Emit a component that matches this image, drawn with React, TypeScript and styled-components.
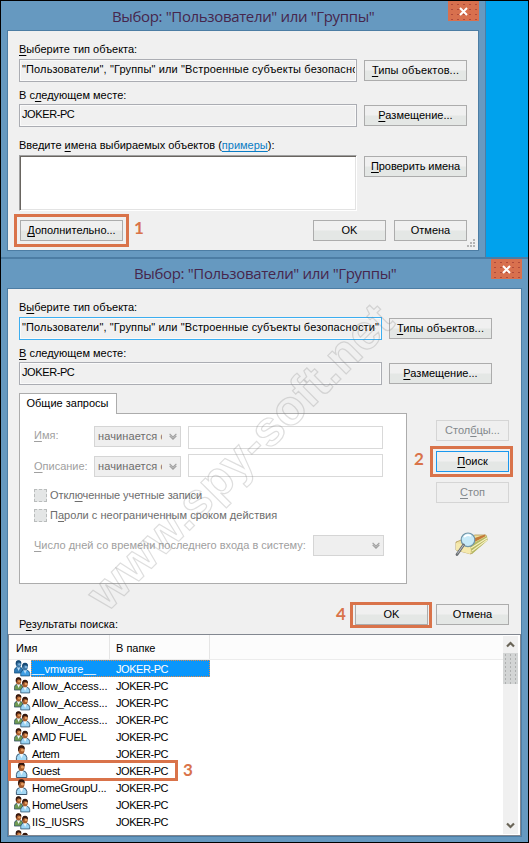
import React from "react";
import styled, { createGlobalStyle, css } from "styled-components";

const Global = createGlobalStyle`
  * { box-sizing: border-box; }
  body { margin: 0; background: #00a2ed; }
`;

const Screen = styled.main`
  position: relative;
  width: 529px;
  height: 843px;
  overflow: hidden;
  border: 1px solid #000;
  background: #00a2ed;
  color: #000;
  font: 11px/13px "Liberation Sans", Arial, sans-serif;
  white-space: nowrap;
`;

const Dialog = styled.section<{ $w: number; $h: number; $second?: boolean }>`
  width: ${(p) => p.$w}px;
  height: ${(p) => p.$h}px;
  padding: 0 6px 6px;
  background: #6699c0;
  ${(p) => (p.$second ? "border-top: 2px solid #4c7da4;" : "border-right: 1px solid #4c7da4;")}
`;

const TitleBar = styled.header<{ $shift: number }>`
  display: flex;
  height: 29px;
  padding-left: ${(p) => p.$shift}px;
  justify-content: space-between;
`;

const Title = styled.h1<{ $top: number }>`
  margin: ${(p) => p.$top}px 0 0;
  font: 400 15px/20px "Open Sans", "Noto Sans", sans-serif;
  letter-spacing: -0.35px;
  color: #46264c;
`;

const CloseBox = styled.button`
  display: grid;
  place-items: center;
  width: 31px;
  height: 20px;
  padding: 0;
  border: 0;
  background: radial-gradient(circle, #b04a3a 0.6px, transparent 0.8px) 1px 1px / 6px 5px #d8704e;
`;

const Client = styled.div`
  position: relative;
  border: 1px solid #4c7da4;
  background: #f0f0f0;
`;

const Form = styled.div`
  display: flex;
  gap: 7px;
  padding-left: 11px;
`;

const Column = styled.div<{ $w: number }>`
  width: ${(p) => p.$w}px;
  padding-top: 12px;
`;

const Actions = styled.div`
  display: flex;
  flex-direction: column;
  gap: 24px;
  padding-top: 29px;
`;

const ActionGap = styled.div`
  padding-top: 6px;
`;

const Label = styled.div<{ $mt?: number; $mb?: number }>`
  height: 13px;
  margin: ${(p) => p.$mt ?? 0}px 0 ${(p) => p.$mb ?? 0}px;
`;

const Key = styled.span`
  text-decoration: underline;
  text-underline-offset: 2px;
  text-decoration-thickness: 1px;
  text-decoration-skip-ink: none;
`;

const Field = styled.div<{ $focus?: boolean; $ls: number }>`
  height: 23px;
  padding: 3px 1px 0 2px;
  border: 1px solid ${(p) => (p.$focus ? "#3caef0" : "#abadb3")};
  box-shadow: inset 0 0 0 1px #fafafa;
  letter-spacing: ${(p) => p.$ls}px;
`;

const FieldText = styled.div`
  overflow: hidden;
`;

const TextArea = styled.div`
  height: 56px;
  background: #fff;
  border: 1px solid;
  border-color: #a0a0a0 #fff #fff #a0a0a0;
  box-shadow: inset 1px 1px 0 #696560, inset -1px -1px 0 #e3e3e3;
`;

const Link = styled.a`
  color: #0a7cc4;
  text-decoration: underline;
  text-underline-offset: 2px;
`;

type Tone = "normal" | "primary" | "disabled";

const Button = styled.button<{ $w?: number; $tone?: Tone; $ls?: number }>`
  width: ${(p) => p.$w ?? 103}px;
  height: 21px;
  padding: 0;
  flex: none;
  border: 1px solid #acacac;
  background: linear-gradient(#f0f0f0 0 48%, #e4e7e5 52% 100%);
  color: #000;
  font: inherit;
  letter-spacing: ${(p) => p.$ls ?? 0}px;
  ${(p) => p.$tone === "primary" && css`border-color: #1a97ee;`}
  ${(p) => p.$tone === "disabled" && css`border-color: #d5d5d5; background: #efefef; color: #83888c;`}
`;

const Marked = styled.div`
  position: relative;
  display: flex;
`;

const Frame = styled.span<{ $x: number; $y: number; $w: number; $h: number; $line?: number }>`
  position: absolute;
  left: ${(p) => p.$x}px;
  top: ${(p) => p.$y}px;
  width: ${(p) => p.$w}px;
  height: ${(p) => p.$h}px;
  border: ${(p) => p.$line ?? 3}px solid #d9734a;
  pointer-events: none;
`;

const Step = styled.b<{ $x: number; $y: number }>`
  position: absolute;
  left: ${(p) => p.$x}px;
  top: ${(p) => p.$y}px;
  font: 700 17px/20px Lato, "Open Sans", sans-serif;
  color: #d9734a;
`;

const Footer = styled.div<{ $top: number; $side: number }>`
  display: flex;
  height: 30px;
  margin-top: ${(p) => p.$top}px;
  padding: 0 ${(p) => p.$side}px 0 12px;
  justify-content: space-between;
`;

const ResultsLabel = styled.div`
  margin: 14px 0 0 -1px;
`;

const ButtonPair = styled.div`
  display: flex;
  align-items: flex-start;
  gap: 8px;
`;

const Grip = styled.svg`
  position: absolute;
  right: 2px;
  bottom: 2px;
`;

const QueryArea = styled.div`
  display: flex;
  gap: 29px;
  margin: 8px 0 0 11px;
`;

const Tabs = styled.div`
  width: 388px;
`;

const Tab = styled.div`
  position: relative;
  z-index: 1;
  width: 98px;
  height: 21px;
  padding: 3px 0 0 6.5px;
  border: 1px solid #acacac;
  border-bottom: 0;
  background: #fff;
`;

const Panel = styled.div`
  height: 171px;
  margin-top: -1px;
  padding: 12px 0 0 14px;
  border: 1px solid #acacac;
  background: #fff;
`;

const QueryRow = styled.div<{ $h: number; $end?: boolean }>`
  display: flex;
  height: ${(p) => p.$h}px;
  align-items: ${(p) => (p.$end ? "flex-end" : "flex-start")};
`;

const RowName = styled.div<{ $w: number; $pad: string }>`
  width: ${(p) => p.$w}px;
  padding: ${(p) => p.$pad};
  color: #a0a0a0;
`;

const Combo = styled.div<{ $w: number }>`
  display: flex;
  justify-content: space-between;
  align-items: center;
  width: ${(p) => p.$w}px;
  height: 21px;
  padding: 0 3px 0 3px;
  border: 1px solid #d5d5d5;
  background: #efefef;
  color: #6d6d6d;
  letter-spacing: 0.12px;
`;

const ComboText = styled.span`
  width: 64px;
  overflow: hidden;
`;

const Input = styled.div`
  width: 195px;
  height: 23px;
  margin-left: 7px;
  border: 1px solid #d9d9d9;
  background: #fff;
`;

const Checks = styled.div`
  display: flex;
  flex-direction: column;
  gap: 7px;
  margin: 12px 0 7px;
`;

const Check = styled.div<{ $ls: number }>`
  display: flex;
  gap: 3px;
  height: 13px;
  color: #6d6d6d;
  letter-spacing: ${(p) => p.$ls}px;
`;

const Box = styled.span`
  width: 13px;
  height: 13px;
  border: 1px dashed #b9bcbc;
  background: #e4e6e6;
`;

const SideButtons = styled.div`
  display: flex;
  flex-direction: column;
  gap: 10px;
  padding-top: 27px;
`;

const SearchPicture = styled.svg`
  margin: 19px 0 0 19px;
`;

const List = styled.div`
  display: flex;
  height: 202px;
  border: 1px solid #828790;
  background: #fff;
`;

const Table = styled.div`
  width: 494px;
  overflow-y: clip;
`;

const HeadRow = styled.div`
  display: flex;
  height: 25px;
  border-bottom: 1px solid #ececec;
  background: #fcfcfc;
`;

const HeadCell = styled.div<{ $w: number; $pad: number }>`
  width: ${(p) => p.$w}px;
  padding: 7px 0 0 ${(p) => p.$pad}px;
  border-right: 1px solid #e5e5e5;
`;

const Row = styled.div`
  position: relative;
  display: flex;
  height: 17px;
  padding-left: 5px;
`;

const Cells = styled.div<{ $on: boolean }>`
  display: flex;
  width: 179px;
  padding: 2px 0 0;
  border: 1px ${(p) => (p.$on ? "dotted #e08b4a" : "solid transparent")};
  background: ${(p) => (p.$on ? "#0a96fb" : "transparent")};
  color: ${(p) => (p.$on ? "#fff" : "#000")};
`;

const Cell = styled.span<{ $w: number; $ls: number }>`
  width: ${(p) => p.$w}px;
  letter-spacing: ${(p) => p.$ls}px;
`;

const ScrollBar = styled.div`
  display: flex;
  flex-direction: column;
  align-items: center;
  width: 15px;
  margin: 1px 0;
  background: #f0f0f0;
`;

const Thumb = styled.div`
  width: 15px;
  height: 31px;
  margin-bottom: auto;
  background: radial-gradient(circle, #aeb0b0 0.6px, transparent 0.8px) 0 0 / 5px 4px #d3d5d5;
`;

const ArrowSvg = styled.svg<{ $m: string }>`
  flex: none;
  margin: ${(p) => p.$m};
`;

const Watermark = styled.svg`
  position: absolute;
  left: 0;
  top: 0;
  pointer-events: none;
`;

function Close() {
  return (
    <CloseBox aria-label="Закрыть">
      <svg width="9" height="9" viewBox="0 0 9 9">
        <path d="M1 1 8 8M8 1 1 8" stroke="#fff" strokeWidth="2" />
      </svg>
    </CloseBox>
  );
}

function Chevron() {
  return (
    <svg width="8" height="7" viewBox="0 0 8 7">
      <path d="M.6 .8 4 4.2 7.4 .8M.6 2.8 4 6.2 7.4 2.8" fill="none" stroke="#a0a0a0" strokeWidth="1.2" />
    </svg>
  );
}

function Person({ body, dim }: { body: string; dim?: boolean }) {
  const line = dim ? "#14507f" : "#2b4c68";
  return (
    <g>
      <path d="M.4 15.5V12.5Q.6 9 4 8.6H6.5Q10.5 9 10.8 12.5V15.5Z" fill={body} stroke={line} strokeWidth=".9" />
      <path d="M3.4 8.7 5.5 13.2 7.6 8.7Z" fill={dim ? "#b9defa" : "#eef6fb"} />
      <ellipse cx="5.4" cy="4.8" rx="3.2" ry="4.2" fill={dim ? "#3c77a6" : "#a85c2c"} />
      <path d="M2.1 5.4Q1.4.4 5.4.3 9.2.3 8.7 4.6 7.4 2.8 5.2 2.8 3.2 3 3 6.3Z" fill={dim ? "#174a75" : "#33180f"} />
      <circle cx="6.4" cy="5.2" r="1.4" fill={dim ? "#7fb2da" : "#e59f62"} />
    </g>
  );
}

function UserIcon({ group, dim }: { group: boolean; dim?: boolean }) {
  return (
    <svg width="17" height="17" viewBox="0 0 17 17">
      {group ? (
        <>
          <g transform="scale(.84)"><Person body={dim ? "#2f7ab4" : "#6f9a52"} dim={dim} /></g>
          <g transform="translate(6.4 2.6) scale(.86)"><Person body={dim ? "#3f9fe4" : "#9ad4f4"} dim={dim} /></g>
        </>
      ) : (
        <g transform="translate(2)"><Person body="#a3d9f6" /></g>
      )}
    </svg>
  );
}

const rows = [
  { name: "__vmware__", group: true, ls: 0.1, on: true },
  { name: "Allow_Access...", group: true, ls: -0.1 },
  { name: "Allow_Access...", group: true, ls: -0.1 },
  { name: "Allow_Access...", group: true, ls: -0.1 },
  { name: "AMD FUEL", group: true, ls: -0.1 },
  { name: "Artem", group: false, ls: -0.4 },
  { name: "Guest", group: false, ls: -0.3 },
  { name: "HomeGroupU...", group: false, ls: -0.2 },
  { name: "HomeUsers", group: true, ls: -0.3 },
  { name: "IIS_IUSRS", group: true, ls: -0.1 },
  { name: "", group: true, ls: 0 },
];

const titleText = 'Выбор: "Пользователи" или "Группы"';

export default function App() {
  return (
    <Screen>
      <Global />
      <Dialog $w={485} $h={256}>
        <TitleBar $shift={105}>
          <Title $top={5}>{titleText}</Title>
          <Close />
        </TitleBar>
        <Client>
          <Form>
            <Column $w={338}>
              <Label $mb={3}><Key>В</Key>ыберите тип объекта:</Label>
              <Field $ls={0.14}><FieldText>"Пользователи", "Группы" или "Встроенные субъекты безопасности"</FieldText></Field>
              <Label $mt={7} $mb={2}>В с<Key>л</Key>едующем месте:</Label>
              <Field $ls={-0.4}>JOKER-PC</Field>
              <Label $mt={12} $mb={3}>Введите <Key>и</Key>мена выбираемых объектов (<Link>примеры</Link>):</Label>
              <TextArea />
            </Column>
            <Actions>
              <Button $ls={0.12}><Key>Т</Key>ипы объектов...</Button>
              <Button><Key>Р</Key>азмещение...</Button>
              <ActionGap><Button $ls={-0.07}><Key>П</Key>роверить имена</Button></ActionGap>
            </Actions>
          </Form>
          <Footer $top={9} $side={11}>
            <Marked>
              <Button><Key>Д</Key>ополнительно...</Button>
              <Frame $x={-6} $y={-6} $w={115} $h={33} />
              <Step $x={114} $y={-2}>1</Step>
            </Marked>
            <ButtonPair>
              <Button $w={73}>OK</Button>
              <Button $w={73}>Отмена</Button>
            </ButtonPair>
          </Footer>
          <Grip width="9" height="9" viewBox="0 0 9 9" fill="#b4b4b4">
            <path d="M6 0h2v2H6zM3 3h2v2H3zM6 3h2v2H6zM0 6h2v2H0zM3 6h2v2H3zM6 6h2v2H6z" />
          </Grip>
        </Client>
      </Dialog>

      <Dialog $w={527} $h={585} $second>
        <TitleBar $shift={127}>
          <Title $top={4}>{titleText}</Title>
          <Close />
        </TitleBar>
        <Client>
          <Form>
            <Column $w={363}>
              <Label $mb={3}>В<Key>ы</Key>берите тип объекта:</Label>
              <Field $focus $ls={0.13}><FieldText>"Пользователи", "Группы" или "Встроенные субъекты безопасности"</FieldText></Field>
              <Label $mt={7} $mb={2}><Key>В</Key> следующем месте:</Label>
              <Field $ls={-0.4}>JOKER-PC</Field>
            </Column>
            <Actions>
              <Button $ls={0.12}><Key>Т</Key>ипы объектов...</Button>
              <Button><Key>Р</Key>азмещение...</Button>
            </Actions>
          </Form>
          <QueryArea>
            <Tabs>
              <Tab>Общие запросы</Tab>
              <Panel>
                <QueryRow $h={28}>
                  <RowName $w={60} $pad="3px 0 0"><Key>И</Key>мя:</RowName>
                  <Combo $w={87}><ComboText>начинается с</ComboText><Chevron /></Combo>
                  <Input />
                </QueryRow>
                <QueryRow $h={23} $end>
                  <RowName $w={60} $pad="0 0 4px"><Key>О</Key>писание:</RowName>
                  <Combo $w={87}><ComboText>начинается с</ComboText><Chevron /></Combo>
                  <Input />
                </QueryRow>
                <Checks>
                  <Check $ls={-0.08}><Box /><span>Откл<Key>ю</Key>ченные учетные записи</span></Check>
                  <Check $ls={0.03}><Box /><span>П<Key>а</Key>роли с неограниченным сроком действия</span></Check>
                </Checks>
                <QueryRow $h={27} $end>
                  <RowName $w={279} $pad="0 0 4px"><Key>Ч</Key>исло дней со времени последнего входа в систему:</RowName>
                  <Combo $w={71}><span /><Chevron /></Combo>
                </QueryRow>
              </Panel>
            </Tabs>
            <SideButtons>
              <Button $w={73} $tone="disabled">Стол<Key>б</Key>цы...</Button>
              <Marked>
                <Button $w={73} $tone="primary"><Key>П</Key>оиск</Button>
                <Frame $x={-6} $y={-5} $w={83} $h={31} />
                <Step $x={-22} $y={-2}>2</Step>
              </Marked>
              <Button $w={73} $tone="disabled"><Key>С</Key>топ</Button>
              <SearchPicture width="34" height="25" viewBox="0 0 34 25">
                <path d="M1 10 20 3 31 3 32 8 16 22 1 18Z" fill="#efe0a0" stroke="#a88d45" strokeWidth=".7" />
                <path d="M15 13 32 4 32.5 8.5 17 22Z" fill="#b5b863" />
                <path d="M16 16 32 6M17 19 32 8" stroke="#f8f0c0" strokeWidth="1.1" />
                <path d="M17 7 30 2.5 30 4.5 14 13Z" fill="#c47a38" />
                <path d="M1 11 15 14V22L1 18Z" fill="#f5e9ae" />
                <circle cx="13" cy="7.8" r="6.8" fill="#c7eaf8" stroke="#7296a8" strokeWidth="1.2" />
                <path d="M9 5Q12 2 16 4" fill="none" stroke="#fff" strokeWidth="1.8" />
                <path d="M8.5 13 2 22.5" stroke="#6a6f73" strokeWidth="2.8" strokeLinecap="round" />
                <path d="M8.5 13 2.5 21.5" stroke="#c6cbd0" strokeWidth=".9" />
              </SearchPicture>
            </SideButtons>
          </QueryArea>
          <Footer $top={20} $side={12}>
            <ResultsLabel>Р<Key>е</Key>зультаты поиска:</ResultsLabel>
            <ButtonPair>
              <Marked>
                <Button $w={73}>OK</Button>
                <Frame $x={-5} $y={-2} $w={82} $h={26} />
                <Step $x={-19} $y={0}>4</Step>
              </Marked>
              <Button $w={73}>Отмена</Button>
            </ButtonPair>
          </Footer>
          <List>
            <Table>
              <HeadRow>
                <HeadCell $w={101} $pad={7}>Имя</HeadCell>
                <HeadCell $w={100} $pad={6}>В папке</HeadCell>
              </HeadRow>
              {rows.map((r, i) => (
                <Row key={i}>
                  <UserIcon group={r.group} dim={r.on} />
                  <Cells $on={!!r.on}>
                    <Cell $w={84} $ls={r.ls}>{r.name}</Cell>
                    <Cell $w={80} $ls={-0.45}>{r.name && "JOKER-PC"}</Cell>
                  </Cells>
                  {r.name === "Guest" && (
                    <>
                      <Frame $x={-1} $y={-2} $w={170} $h={21} />
                      <Step $x={174} $y={-2}>3</Step>
                    </>
                  )}
                </Row>
              ))}
            </Table>
            <ScrollBar>
              <ArrowSvg $m="5px 0 5px" width="9" height="7" viewBox="0 0 9 7">
                <path d="M1 5.5 4.5 2 8 5.5" fill="none" stroke="#6a6558" strokeWidth="2.2" />
              </ArrowSvg>
              <Thumb />
              <ArrowSvg $m="0 0 5px" width="9" height="7" viewBox="0 0 9 7">
                <path d="M1 1.5 4.5 5 8 1.5" fill="none" stroke="#6a6558" strokeWidth="2.2" />
              </ArrowSvg>
            </ScrollBar>
          </List>
        </Client>
      </Dialog>

      <Watermark width="527" height="841" viewBox="1 1 527 841">
        <text
          transform="translate(107 613) rotate(-45)"
          textLength="409"
          fontFamily="'Liberation Sans', Arial, sans-serif"
          fontWeight="700"
          fontSize="49"
          fill="none"
          stroke="#808080"
          strokeOpacity=".26"
          strokeWidth="1.2"
        >
          www.spy-soft.net
        </text>
      </Watermark>
    </Screen>
  );
}
